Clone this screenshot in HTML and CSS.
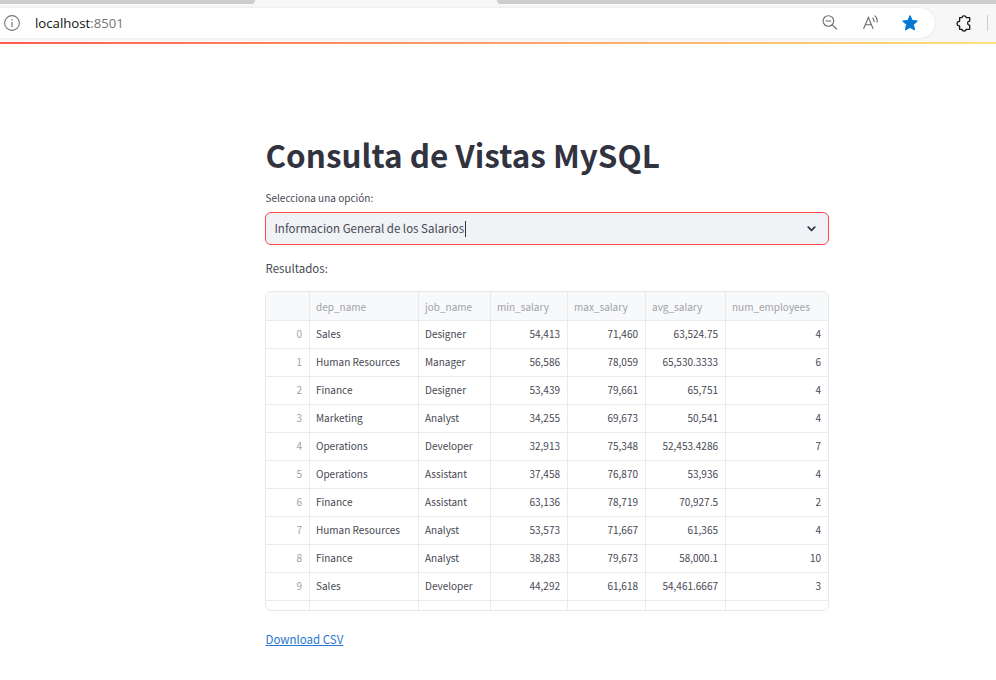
FILE: index.html
```html
<!DOCTYPE html>
<html lang="es">
<head>
<meta charset="utf-8">
<title>Consulta de Vistas MySQL</title>
<link rel="stylesheet" href="styles.css">
</head>
<body>
<header class="browser">
  <div class="tabs"><div class="tab-left"></div><div class="tab-right"></div></div>
  <div class="toolbar">
    <div class="address">
      <svg class="info" width="16" height="16" viewBox="0 0 16 16" fill="none" stroke="#757575"><circle cx="8" cy="8" r="7.4" stroke-width="1.1"/><path d="M8 7v5" stroke-width="1.2"/><path d="M8 4.2v1.4" stroke-width="1.4"/></svg>
      <span class="url">localhost<span class="port">:8501</span></span>
      <svg class="glass" width="16" height="16" viewBox="0 0 16 16" fill="none" stroke="#6b6b6b" stroke-width="1.1" stroke-linecap="round"><circle cx="6.4" cy="6" r="5.3"/><path d="M4 6h4.800M10.2 9.800l4.400 4.200"/></svg>
      <svg class="read" width="17" height="16" viewBox="0 0 17 16" fill="none" stroke="#6b6b6b" stroke-width="1.1" stroke-linecap="round"><path d="M.7 13.500L5.400 2.500 10 13.500M2.300 9.700h6.200M9.800 3.200q1.500 1.500 1.200 3.600M12 .9q3 2.800 2 6.200"/></svg>
      <svg class="star" width="16" height="16" viewBox="0 0 16 16"><path d="M8 .6l2.2 4.8 5.2.6-3.9 3.6 1.1 5.4L8 12.4 3.400 15l1.100-5.400L.6 6l5.200-.6z" fill="#0078d4" stroke="#0078d4" stroke-linejoin="round"/></svg>
    </div>
    <svg class="puzzle" width="16" height="17" viewBox="0 0 16 17" fill="none" stroke="#1b1b1b" stroke-width="1.3" stroke-linejoin="round"><path d="M3.600 2.600h2.500c0-2.400 4-2.400 4 0h3.600v3.600c-2.700-.5-2.700 4.400 0 3.900v4.200h-3.600c0 2.400-4 2.400-4 0H3.600v-3.400C.2 11.200.2 6.400 3.600 6.400z"/></svg>
    <div class="divider"></div>
  </div>
</header>
<div class="decoration"></div>
<main class="content">
  <h1>Consulta de Vistas MySQL</h1>
  <label class="label">Selecciona una opción:</label>
  <div class="select">
    <span class="value">Informacion General de los Salarios</span><span class="caret"></span>
    <svg class="chevron" width="9" height="6" viewBox="0 0 9 6" fill="none" stroke="#31333f" stroke-width="1.7" stroke-linecap="round" stroke-linejoin="round"><path d="M1.300 1.200L4.500 4.400 7.700 1.200"/></svg>
  </div>
  <p class="results">Resultados:</p>
  <div class="frame">
    <div class="row head"><span></span><span>dep_name</span><span>job_name</span><span>min_salary</span><span>max_salary</span><span>avg_salary</span><span>num_employees</span></div>
    <div class="row"><span>0</span><span>Sales</span><span>Designer</span><span>54,413</span><span>71,460</span><span>63,524.75</span><span>4</span></div>
    <div class="row"><span>1</span><span>Human Resources</span><span>Manager</span><span>56,586</span><span>78,059</span><span>65,530.3333</span><span>6</span></div>
    <div class="row"><span>2</span><span>Finance</span><span>Designer</span><span>53,439</span><span>79,661</span><span>65,751</span><span>4</span></div>
    <div class="row"><span>3</span><span>Marketing</span><span>Analyst</span><span>34,255</span><span>69,673</span><span>50,541</span><span>4</span></div>
    <div class="row"><span>4</span><span>Operations</span><span>Developer</span><span>32,913</span><span>75,348</span><span>52,453.4286</span><span>7</span></div>
    <div class="row"><span>5</span><span>Operations</span><span>Assistant</span><span>37,458</span><span>76,870</span><span>53,936</span><span>4</span></div>
    <div class="row"><span>6</span><span>Finance</span><span>Assistant</span><span>63,136</span><span>78,719</span><span>70,927.5</span><span>2</span></div>
    <div class="row"><span>7</span><span>Human Resources</span><span>Analyst</span><span>53,573</span><span>71,667</span><span>61,365</span><span>4</span></div>
    <div class="row"><span>8</span><span>Finance</span><span>Analyst</span><span>38,283</span><span>79,673</span><span>58,000.1</span><span>10</span></div>
    <div class="row"><span>9</span><span>Sales</span><span>Developer</span><span>44,292</span><span>61,618</span><span>54,461.6667</span><span>3</span></div>
    <div class="row"><span></span><span></span><span></span><span></span><span></span><span></span><span></span></div>
  </div>
  <a class="download" href="#">Download CSV</a>
</main>
</body>
</html>
```
FILE: styles.css
```css
* { box-sizing: border-box; }
body {
  margin: 0;
  height: 680px;
  overflow: hidden;
  background: #fff;
  color: #464853;
  font-family: "Noto Sans CJK SC", "Noto Sans", sans-serif;
  font-size: 11.5px;
}
svg { display: block; flex: none; }
.browser { height: 42px; background: #f7f7f7; }
.tabs { display: flex; justify-content: space-between; height: 8px; }
.tab-left, .tab-right { height: 4px; background: #cdcdcd; }
.tab-left { width: 255px; border-bottom-right-radius: 4px; }
.tab-right { width: 499px; border-bottom-left-radius: 4px; }
.toolbar { display: flex; align-items: center; height: 30px; }
.address {
  display: flex;
  align-items: center;
  width: 935px;
  height: 30px;
  padding-left: 4px;
  background: #fff;
  border-radius: 0 15px 15px 0;
  box-shadow: 0 0 2px rgba(0, 0, 0, .12);
}
.url {
  margin-left: 15px;
  width: 787px;
  color: #111;
  font: 13.2px/20px "Open Sans", sans-serif;
}
.port { color: #767676; }
.read { margin-left: 25px; }
.star { margin-left: 22px; }
.puzzle { margin-left: 20.5px; }
.divider { width: 1px; height: 16px; margin-left: 15.5px; background: #ccc; }
.decoration { height: 2px; background: linear-gradient(90deg, #ff5c50, #ff9f68 50%, #ffe17c); }
.content { width: 564px; margin-left: 265px; padding-top: 90px; }
h1 {
  margin: 0 0 0 .5px;
  color: #31333f;
  font-size: 31.45px;
  line-height: 42px;
  font-weight: 700;
  white-space: nowrap;
}
.label { display: block; margin: 13px 0 6px .5px; font-size: 10px; line-height: 17px; }
.select {
  display: flex;
  align-items: center;
  height: 33px;
  padding: 0 12px 0 8.5px;
  background: #f0f2f6;
  border: 1px solid #ff4b4b;
  border-radius: 6px;
}
.value { margin-top: -1px; }
.caret { width: 1px; height: 16px; margin-left: .5px; background: #31333f; }
.chevron { margin-left: auto; }
.results { margin: 13px 0 13px .5px; line-height: 20px; }
.frame {
  height: 320px;
  overflow: hidden;
  border: 1px solid #e6e8eb;
  border-radius: 6px;
  font-size: 10px;
}
.row { display: grid; grid-template-columns: 44px 109px 72px 77px 78px 80px 102px; height: 28px; }
.row span {
  height: 28px;
  padding: 0 7px 0 6px;
  border-right: 1px solid #e9eaec;
  border-bottom: 1px solid #e9eaec;
  line-height: 26px;
  white-space: nowrap;
}
.row span:last-child { border-right: 0; }
.row span:first-child { color: #a0a2a9; text-align: right; }
.row span:nth-child(n+4) { text-align: right; }
.row.head { height: 29px; background: #f8f9fb; }
.row.head span { height: 29px; color: #a0a2a9; text-align: left; line-height: 29px; }
.download { display: inline-block; margin: 18px 0 0 .5px; line-height: 20px; color: #2878cd; }
```
